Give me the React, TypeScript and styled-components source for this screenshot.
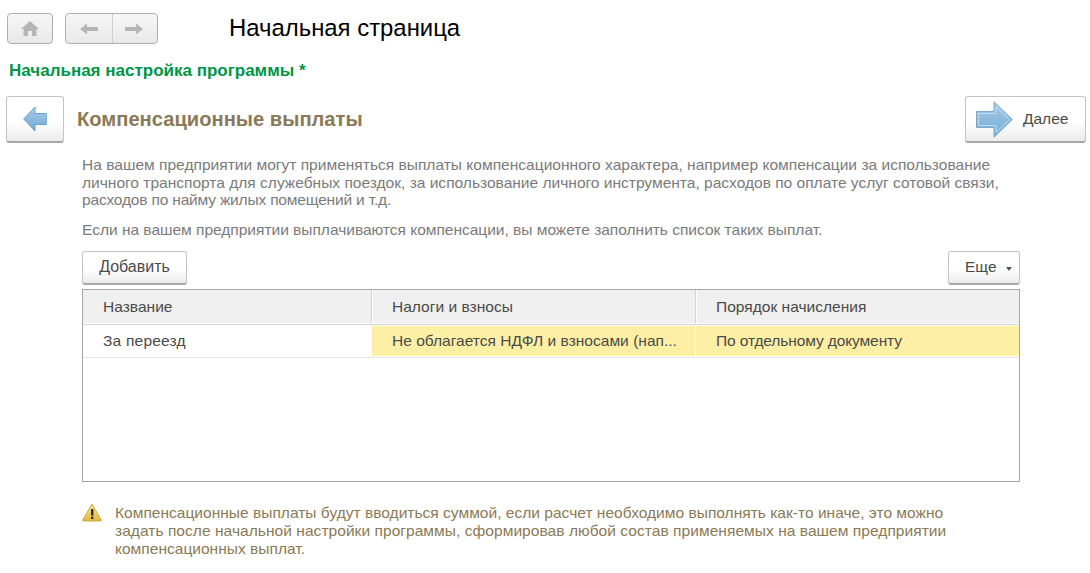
import React from "react";
import styled, { createGlobalStyle } from "styled-components";

const Global = createGlobalStyle`
  html, body { margin: 0; padding: 0; background: #fff; }
  body { font-family: "Liberation Sans", Arial, sans-serif; width: 1090px; height: 573px; overflow: hidden; }
`;

const Page = styled.div`
  width: 1090px;
  height: 573px;
  display: flex;
  flex-direction: column;
`;

const TopBar = styled.div`
  height: 31px;
  margin-top: 13px;
  padding-left: 7px;
  display: flex;
  align-items: stretch;
`;

const NavGroup = styled.div`
  display: flex;
  width: 93px;
  height: 31px;
  box-sizing: border-box;
  margin-left: 12px;
  border: 1px solid #b0b0b0;
  border-radius: 4px;
  background: linear-gradient(#f7f7f7, #e8e8e8);
`;

const HomeButton = styled(NavGroup)`
  width: 46px;
  margin-left: 0;
  align-items: center;
  justify-content: center;
`;

const BackCell = styled.div`
  flex: none;
  width: 46px;
  display: flex;
  align-items: center;
  justify-content: center;
`;

const ForwardCell = styled.div`
  flex: 1;
  padding-right: 3px;
  display: flex;
  align-items: center;
  justify-content: center;
  border-left: 1px solid #cfcfcf;
`;

const PageTitle = styled.div`
  margin-left: 71px;
  font-size: 23.9px;
  line-height: 30px;
  color: #000;
`;

const Section = styled.div`
  margin: 18px 0 0 9px;
  font-size: 17px;
  font-weight: bold;
  line-height: 18px;
  color: #009646;
`;

const StepBar = styled.div`
  margin-top: 16px;
  padding: 0 4px 0 6px;
  display: flex;
  align-items: center;
  height: 47px;
`;

const StepButton = styled.div`
  box-sizing: border-box;
  height: 47px;
  display: flex;
  align-items: center;
  border: 1px solid #c4c4c4;
  border-bottom: 2px solid #a8a8a8;
  border-radius: 3px;
  background: linear-gradient(#fff 55%, #ececec);
`;

const BackButton = styled(StepButton)`
  width: 58px;
  justify-content: center;
`;

const NextButton = styled(StepButton)`
  width: 121px;
  gap: 10px;
  padding-left: 10px;
  font-size: 15.5px;
  color: #4a4a4a;
`;

const StepTitle = styled.div`
  flex: 1;
  margin-left: 13px;
  font-size: 20.15px;
  font-weight: bold;
  color: #8a7a55;
`;

const Content = styled.div`
  margin: 13px 0 0 82px;
  width: 938px;
`;

const Para = styled.p<{ $top?: number; $track?: number }>`
  margin: ${(p) => p.$top ?? 0}px 0 0;
  font-size: 15.55px;
  line-height: 17.67px;
  letter-spacing: ${(p) => p.$track ?? 0}px;
  color: #7b7b7b;
  white-space: nowrap;
`;

const TableTools = styled.div`
  margin-top: 12px;
  display: flex;
  justify-content: space-between;
`;

const ToolButton = styled.div`
  box-sizing: border-box;
  height: 34px;
  display: flex;
  align-items: center;
  border: 1px solid #c4c4c4;
  border-bottom: 2px solid #a8a8a8;
  border-radius: 3px;
  background: linear-gradient(#fff 55%, #ececec);
  font-size: 16px;
  color: #4a4a4a;
`;

const AddButton = styled(ToolButton)`
  width: 105px;
  justify-content: center;
`;

const MoreButton = styled(ToolButton)`
  width: 72px;
  padding-left: 16px;
  gap: 9px;
  font-size: 15.5px;
`;

const Caret = styled.span`
  margin-top: 3px;
  border-left: 3.5px solid transparent;
  border-right: 3.5px solid transparent;
  border-top: 4px solid #555;
`;

const Table = styled.div`
  box-sizing: border-box;
  margin-top: 4px;
  height: 193px;
  border: 1px solid #a6a6a6;
`;

const HeadRow = styled.div`
  display: grid;
  grid-template-columns: 288px 324px 1fr;
  height: 35px;
  box-sizing: border-box;
  padding-bottom: 1px;
  border-bottom: 1px solid #d4d4d4;
`;

const BodyRow = styled.div`
  display: grid;
  grid-template-columns: 288px 324px 1fr;
  height: 33px;
  box-sizing: border-box;
  padding: 1px 0;
  border-bottom: 1px solid #e6e6e6;
`;

const Cell = styled.div<{ $hl?: boolean; $first?: boolean; $track?: number }>`
  box-sizing: border-box;
  padding: 0 20px;
  display: flex;
  align-items: center;
  overflow: hidden;
  white-space: nowrap;
  font-size: 15.55px;
  letter-spacing: ${(p) => p.$track ?? 0}px;
  color: #4a4a4a;
  background: ${(p) => (p.$hl ? "#fdf0a5" : "#fff")};
  border-left: ${(p) => (p.$first ? "none" : "1px solid #fff")};
`;

const HeadCell = styled(Cell)`
  padding-top: 2px;
  background: #f0f0f0;
  border-left: ${(p) => (p.$first ? "none" : "1px solid #d4d4d4")};
  box-shadow: ${(p) => (p.$first ? "none" : "inset 1px 0 #fff")};
`;

const Note = styled.div`
  margin-top: 22px;
  display: flex;
  align-items: flex-start;
`;

const WarnIcon = styled.svg`
  flex: none;
  width: 20px;
  height: 19px;
  margin: -1px 13px 0 0;
`;

const NoteText = styled.p`
  margin: 0;
  font-size: 15.55px;
  line-height: 18px;
  color: #8a7a55;
  white-space: nowrap;
`;

const NoteLine = styled.span<{ $track?: number }>`
  display: block;
  letter-spacing: ${(p) => p.$track ?? 0}px;
`;

const GrayArrow = ({ flip }: { flip?: boolean }) => (
  <svg width="18" height="12" viewBox="0 0 18 12" style={flip ? { transform: "scaleX(-1)" } : undefined}>
    <path d="M0 6 L7 0.5 L7 4 L18 4 L18 8 L7 8 L7 11.5 Z" fill="#b5b5b5" />
  </svg>
);

export default function App() {
  return (
    <Page>
      <Global />
      <TopBar>
        <HomeButton>
          <svg width="18" height="15" viewBox="0 0 18 15">
            <path d="M9 0 L18 8 L15.5 8 L15.5 15 L11 15 L11 10 L7 10 L7 15 L2.5 15 L2.5 8 L0 8 Z" fill="#b5b5b5" />
          </svg>
        </HomeButton>
        <NavGroup>
          <BackCell><GrayArrow /></BackCell>
          <ForwardCell><GrayArrow flip /></ForwardCell>
        </NavGroup>
        <PageTitle>Начальная страница</PageTitle>
      </TopBar>
      <Section>Начальная настройка программы *</Section>
      <StepBar>
        <BackButton>
          <svg width="24" height="26" viewBox="0 0 24 26">
            <defs>
              <linearGradient id="b" x1="0" y1="0" x2="0" y2="1">
                <stop offset="0" stopColor="#a9cde8" />
                <stop offset="1" stopColor="#6fa9d4" />
              </linearGradient>
            </defs>
            <path d="M0.7 13 L12 1 L12 7.5 L23.3 7.5 L23.3 18.5 L12 18.5 L12 25 Z" fill="url(#b)" stroke="#6ea3c9" />
          </svg>
        </BackButton>
        <StepTitle>Компенсационные выплаты</StepTitle>
        <NextButton>
          <svg width="37" height="37" viewBox="0 0 37 37">
            <defs>
              <linearGradient id="n" x1="0" y1="0" x2="0" y2="1">
                <stop offset="0" stopColor="#a9cde8" />
                <stop offset="1" stopColor="#6fa9d4" />
              </linearGradient>
            </defs>
            <path d="M0.5 10.5 L18 10.5 L18 0.8 L36.3 18.5 L18 36.2 L18 26.5 L0.5 26.5 Z" fill="url(#n)" stroke="#7aa9cc" />
            <path d="M2.5 12.5 L20 12.5 L20 5.5 L33.5 18.5 L20 31.5 L20 24.5 L2.5 24.5 Z" fill="none" stroke="#c3dcef" />
          </svg>
          Далее
        </NextButton>
      </StepBar>
      <Content>
        <Para>На вашем предприятии могут применяться выплаты компенсационного характера, например компенсации за использование</Para>
        <Para $track={-0.01}>личного транспорта для служебных поездок, за использование личного инструмента, расходов по оплате услуг сотовой связи,</Para>
        <Para $track={-0.2}>расходов по найму жилых помещений и т.д.</Para>
        <Para $top={12} $track={-0.03}>Если на вашем предприятии выплачиваются компенсации, вы можете заполнить список таких выплат.</Para>
        <TableTools>
          <AddButton>Добавить</AddButton>
          <MoreButton>Еще<Caret /></MoreButton>
        </TableTools>
        <Table>
          <HeadRow>
            <HeadCell $first>Название</HeadCell>
            <HeadCell>Налоги и взносы</HeadCell>
            <HeadCell>Порядок начисления</HeadCell>
          </HeadRow>
          <BodyRow>
            <Cell $first $track={0.2}>За переезд</Cell>
            <Cell $hl>Не облагается НДФЛ и взносами (нап...</Cell>
            <Cell $hl $track={-0.13}>По отдельному документу</Cell>
          </BodyRow>
        </Table>
        <Note>
          <WarnIcon viewBox="0 0 20 19">
            <defs>
              <linearGradient id="w" x1="0" y1="0" x2="0" y2="1">
                <stop offset="0" stopColor="#fbeaa0" />
                <stop offset="1" stopColor="#e2b93c" />
              </linearGradient>
            </defs>
            <path d="M10 1 L19.3 17 Q19.5 18 18.5 18 L1.5 18 Q0.5 18 0.7 17 Z" fill="url(#w)" stroke="#c9a94a" strokeLinejoin="round" />
            <rect x="9" y="6" width="2.4" height="6.5" fill="#2b2b2b" />
            <rect x="9" y="13.6" width="2.4" height="2.4" fill="#2b2b2b" />
          </WarnIcon>
          <NoteText>
            <NoteLine>Компенсационные выплаты будут вводиться суммой, если расчет необходимо выполнять как-то иначе, это можно</NoteLine>
            <NoteLine $track={0.03}>задать после начальной настройки программы, сформировав любой состав применяемых на вашем предприятии</NoteLine>
            <NoteLine>компенсационных выплат.</NoteLine>
          </NoteText>
        </Note>
      </Content>
    </Page>
  );
}
